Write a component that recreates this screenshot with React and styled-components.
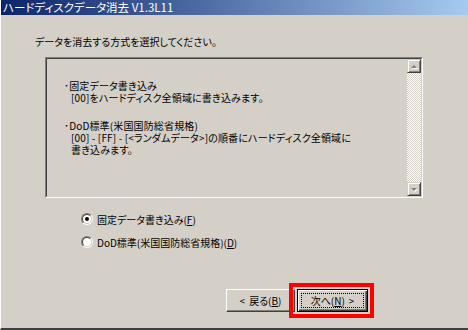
import React from 'react';
import styled, { createGlobalStyle } from 'styled-components';

const GlobalStyle = createGlobalStyle`
	html, body {
		margin: 0;
		padding: 0;
		background: #D4D0C8;
	}
	body {
		font-family: 'Noto Sans CJK JP', 'Noto Sans', sans-serif;
		font-feature-settings: 'palt';
		color: #000000;
	}
`;

const dither = `repeating-conic-gradient(#FFFFFF 0 25%, #D4D0C8 0 50%) 0 0 / 2px 2px`;

const Window = styled.div`
	width: 468px;
	height: 330px;
	box-sizing: border-box;
	display: flex;
	flex-direction: column;
	background: #D4D0C8;
	border-left: 1px solid #FFFFFF;
	border-bottom: 2px solid #404040;
	overflow: hidden;
`;

const TitleBar = styled.div`
	height: 15px;
	flex: none;
	margin-left: -1px;
	display: flex;
	align-items: center;
	padding-left: 3px;
	background: linear-gradient(to right, #0A246A, #A6CAF0);
	color: #FFFFFF;
	font-size: 11.5px;
	line-height: 15px;
	white-space: nowrap;
`;

const Body = styled.div`
	flex: 1;
	display: flex;
	flex-direction: column;
`;

const Prompt = styled.div`
	margin: 21px 0 0 34px;
	font-size: 10px;
	line-height: 12px;
	white-space: nowrap;
`;

const Panel = styled.div`
	margin: 9px 0 0 44px;
	width: 378px;
	height: 141px;
	box-sizing: border-box;
	display: flex;
	border: 1px solid;
	border-color: #808080 #FFFFFF #FFFFFF #808080;
`;

const PanelInner = styled.div`
	flex: 1;
	display: flex;
	border: 1px solid;
	border-color: #404040 #D4D0C8 #D4D0C8 #404040;
`;

const PanelText = styled.div`
	flex: 1;
	padding: 21px 0 0 17px;
	font-size: 10px;
	line-height: 12px;
	letter-spacing: 0.15px;
	white-space: nowrap;
`;

const Paragraph = styled.div`
	margin-bottom: 16px;
`;

const Line = styled.div`
	padding-left: ${({ indent }) => (indent ? '7px' : '0')};
`;

const ScrollBar = styled.div`
	width: 14px;
	display: flex;
	flex-direction: column;
	background: ${dither};
`;

const ScrollButton = styled.div`
	height: 14px;
	box-sizing: border-box;
	display: flex;
	align-items: center;
	justify-content: center;
	background: #D4D0C8;
	border: 1px solid;
	border-color: #D4D0C8 #404040 #404040 #D4D0C8;
	box-shadow: inset 1px 1px 0 #FFFFFF, inset -1px -1px 0 #808080;
	margin-top: ${({ bottom }) => (bottom ? 'auto' : '0')};
`;

const Arrow = styled.span`
	width: 0;
	height: 0;
	border-left: 3px solid transparent;
	border-right: 3px solid transparent;
	${({ down }) => (down ? 'border-top: 3px solid #808080;' : 'border-bottom: 3px solid #808080;')}
	filter: drop-shadow(1px 1px 0 #FFFFFF);
`;

const Options = styled.div`
	margin: 14px 0 0 80px;
	display: flex;
	flex-direction: column;
	gap: 9px;
`;

const OptionRow = styled.label`
	display: flex;
	align-items: center;
	gap: 4px;
	height: 14px;
	font-size: 10px;
	white-space: nowrap;
`;

const RadioOuter = styled.span`
	width: 12px;
	height: 12px;
	box-sizing: border-box;
	border-radius: 50%;
	border: 1px solid;
	border-color: #808080 #FFFFFF #FFFFFF #808080;
	display: flex;
`;

const RadioInner = styled.span`
	flex: 1;
	border-radius: 50%;
	border: 1px solid;
	border-color: #404040 #D4D0C8 #D4D0C8 #404040;
	background: #FFFFFF;
	display: flex;
	align-items: center;
	justify-content: center;

	&::after {
		content: '';
		width: 4px;
		height: 4px;
		border-radius: 50%;
		background: ${({ checked }) => (checked ? '#000000' : 'transparent')};
	}
`;

const Key = styled.span`
	text-decoration: underline;
`;

const ButtonRow = styled.div`
	margin: auto 100px 16px 0;
	align-self: flex-end;
	display: flex;
	gap: 2px;
`;

const Button = styled.div`
	width: ${({ focused }) => (focused ? '71px' : '69px')};
	height: 23px;
	box-sizing: border-box;
	display: flex;
	align-items: center;
	justify-content: center;
	gap: 4px;
	font-size: 10px;
	white-space: nowrap;
	background: #D4D0C8;
	border: 1px solid;
	border-color: ${({ focused }) => (focused ? '#000000' : '#FFFFFF #404040 #404040 #FFFFFF')};
	box-shadow: ${({ focused }) =>
		focused
			? 'inset 1px 1px 0 #FFFFFF, inset -1px -1px 0 #404040, inset -2px -2px 0 #808080'
			: 'inset -1px -1px 0 #808080'};
	position: relative;
`;

const FocusRing = styled.span`
	position: absolute;
	inset: 3px;
	border: 1px dotted #000000;
`;

const Highlight = styled.div`
	position: relative;

	&::after {
		content: '';
		position: absolute;
		left: -8px;
		top: -6px;
		right: -6px;
		bottom: -6px;
		border: 4px solid #FF0000;
		pointer-events: none;
	}
`;

const App = () => {
	return (
		<>
			<GlobalStyle />
			<Window>
				<TitleBar>ハードディスクデータ消去 V1.3L11</TitleBar>
				<Body>
					<Prompt>データを消去する方式を選択してください。</Prompt>
					<Panel>
						<PanelInner>
							<PanelText>
								<Paragraph>
									<Line>･固定データ書き込み</Line>
									<Line indent>[00]をハードディスク全領域に書き込みます。</Line>
								</Paragraph>
								<Paragraph>
									<Line>･DoD標準(米国国防総省規格)</Line>
									<Line indent>[00] - [FF] - [&lt;ランダムデータ&gt;]の順番にハードディスク全領域に</Line>
									<Line indent>書き込みます。</Line>
								</Paragraph>
							</PanelText>
							<ScrollBar>
								<ScrollButton><Arrow /></ScrollButton>
								<ScrollButton bottom><Arrow down /></ScrollButton>
							</ScrollBar>
						</PanelInner>
					</Panel>
					<Options>
						<OptionRow>
							<RadioOuter><RadioInner checked /></RadioOuter>
							<span>固定データ書き込み(<Key>F</Key>)</span>
						</OptionRow>
						<OptionRow>
							<RadioOuter><RadioInner /></RadioOuter>
							<span>DoD標準(米国国防総省規格)(<Key>D</Key>)</span>
						</OptionRow>
					</Options>
					<ButtonRow>
						<Button><span>&lt;</span><span>戻る(<Key>B</Key>)</span></Button>
						<Highlight>
							<Button focused>
								<FocusRing />
								<span>次へ(<Key>N</Key>)</span><span>&gt;</span>
							</Button>
						</Highlight>
					</ButtonRow>
				</Body>
			</Window>
		</>
	);
};

export default App;
